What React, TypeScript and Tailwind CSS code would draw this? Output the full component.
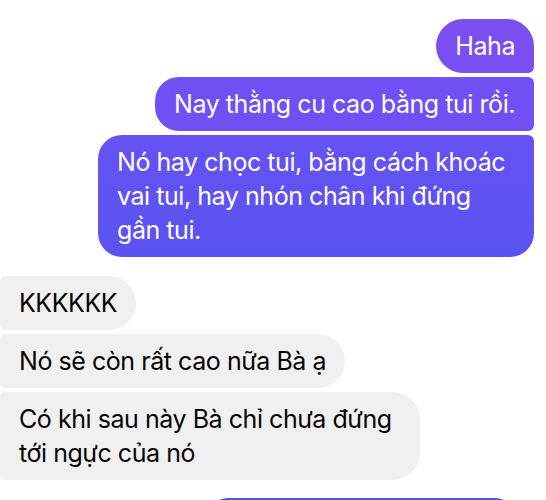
import React from "react";

const font = { fontFamily: "Inter, 'Noto Sans', sans-serif" };

export default function App() {
  return (
    <div
      className="w-[546px] h-[500px] overflow-hidden bg-white flex flex-col pt-[19px] text-[25px] leading-[34px] tracking-[-0.45px]"
      style={font}
    >
      {/* Sent group */}
      <div className="flex flex-col items-end gap-[4px] pr-[12px]">
        <div className="bg-[#7b4ef2] text-white px-[19px] py-[10px] rounded-l-[27px] rounded-tr-[27px] rounded-br-[6px]">
          Haha
        </div>
        <div className="bg-[#7050f3] text-white px-[19px] py-[10px] rounded-l-[24px] rounded-r-[6px]">
          Nay thằng cu cao bằng tui rồi.
        </div>
        <div className="w-[436px] whitespace-nowrap bg-linear-to-b from-[#6552f3] to-[#5a53f0] text-white px-[19px] py-[10px] rounded-l-[24px] rounded-tr-[6px] rounded-br-[24px]">
          Nó hay chọc tui, bằng cách khoác
          <br />
          vai tui, hay nhón chân khi đứng
          <br />
          gần tui.
        </div>
      </div>

      {/* Received group */}
      <div className="flex flex-col items-start gap-[4px] mt-[19px]">
        <div className="bg-[#f0f0f0] text-[#050505] px-[19px] py-[10px] rounded-l-[5px] rounded-r-[27px]">
          KKKKKK
        </div>
        <div className="bg-[#f0f0f0] text-[#050505] px-[19px] py-[10px] rounded-l-[5px] rounded-r-[27px]">
          Nó sẽ còn rất cao nữa Bà ạ
        </div>
        <div className="w-[420px] whitespace-nowrap bg-[#f0f0f0] text-[#050505] px-[19px] py-[10px] rounded-l-[5px] rounded-r-[27px]">
          Có khi sau này Bà chỉ chưa đứng
          <br />
          tới ngực của nó
        </div>
      </div>

      {/* Next sent bubble, cut off at the bottom */}
      <div className="flex justify-end pr-[31px] mt-[18px]">
        <div className="w-[307px] h-[40px] shrink-0 bg-[#4c58c6] rounded-t-[20px]" />
      </div>
    </div>
  );
}
